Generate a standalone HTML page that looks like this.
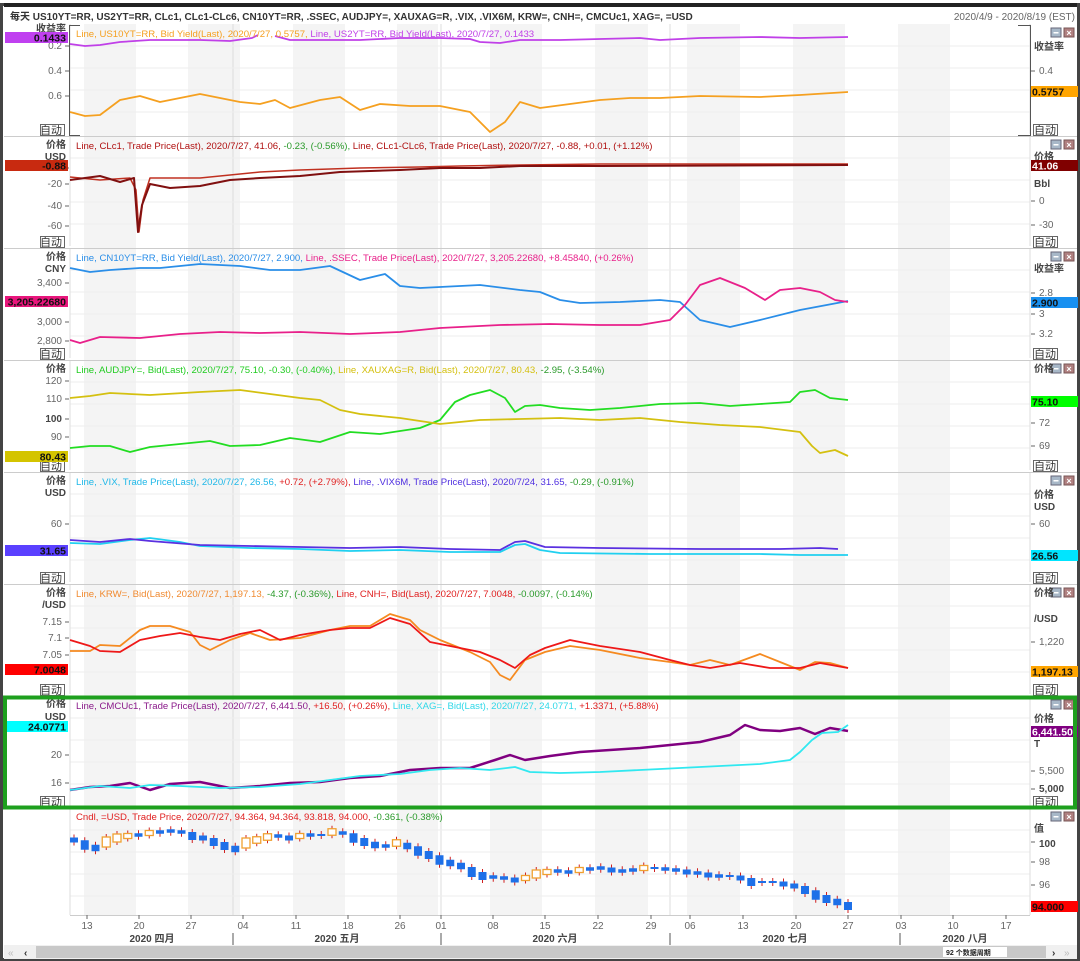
<!DOCTYPE html>
<html><head><meta charset="utf-8"><style>
html,body{margin:0;padding:0;background:#fff;}
body{width:1080px;height:961px;overflow:hidden;}
svg{display:block;font-family:"Liberation Sans","Noto Sans CJK SC",sans-serif;}
.t{font-size:9.6px;}
.ax{font-size:10px;fill:#666;}
.axb{font-size:10px;fill:#444;font-weight:bold;}
</style></head><body>
<svg id="s" width="1080" height="961" viewBox="0 0 1080 961" xmlns="http://www.w3.org/2000/svg">
<rect x="0" y="0" width="1080" height="961" fill="#fff"/>
<g id="bands"></g>
<g id="grid"></g>
<rect x="1.5" y="4.5" width="1077" height="955" fill="none" stroke="#444" stroke-width="3"/>
<line x1="4" y1="5" x2="1077" y2="5" stroke="#222" stroke-width="4"/>
<text x="10" y="20" style="font-size:10px;font-weight:bold;fill:#333">每天 US10YT=RR, US2YT=RR, CLc1, CLc1-CLc6, CN10YT=RR, .SSEC, AUDJPY=, XAUXAG=R, .VIX, .VIX6M, KRW=, CNH=, CMCUc1, XAG=, =USD</text>
<text x="1075" y="20" text-anchor="end" class="ax">2020/4/9 - 2020/8/19 (EST)</text>
<g id="seps"></g>
<g id="lines"></g>
<g id="candles"></g>
<path d="M80,25.5 H69.5 V135.5 H80 M1018,25.5 H1030.5 V135.5 H1018" fill="none" stroke="#555" stroke-width="1"/>
<text x="76" y="37" class="t"><tspan fill="#f5a020">Line, US10YT=RR, Bid Yield(Last), 2020/7/27, 0.5757, </tspan><tspan fill="#c040e8">Line, US2YT=RR, Bid Yield(Last), 2020/7/27, 0.1433</tspan></text>
<text x="76" y="149" class="t" fill="#b01010">Line, CLc1, Trade Price(Last), 2020/7/27, 41.06, <tspan fill="#2a9a2a">-0.23, (-0.56%),</tspan> Line, CLc1-CLc6, Trade Price(Last), 2020/7/27, -0.88, +0.01, (+1.12%)</text>
<text x="76" y="261" class="t"><tspan fill="#2a8ee8">Line, CN10YT=RR, Bid Yield(Last), 2020/7/27, 2.900, </tspan><tspan fill="#e8208a">Line, .SSEC, Trade Price(Last), 2020/7/27, 3,205.22680, +8.45840, (+0.26%)</tspan></text>
<text x="76" y="373" class="t"><tspan fill="#22cc22">Line, AUDJPY=, Bid(Last), 2020/7/27, 75.10, -0.30, (-0.40%), </tspan><tspan fill="#d4c010">Line, XAUXAG=R, Bid(Last), 2020/7/27, 80.43, </tspan><tspan fill="#2a9a2a">-2.95, (-3.54%)</tspan></text>
<text x="76" y="485" class="t"><tspan fill="#20b8e8">Line, .VIX, Trade Price(Last), 2020/7/27, 26.56, </tspan><tspan fill="#e02020">+0.72, (+2.79%), </tspan><tspan fill="#5030e0">Line, .VIX6M, Trade Price(Last), 2020/7/24, 31.65, </tspan><tspan fill="#2a9a2a">-0.29, (-0.91%)</tspan></text>
<text x="76" y="597" class="t"><tspan fill="#f08a30">Line, KRW=, Bid(Last), 2020/7/27, 1,197.13, </tspan><tspan fill="#2a9a2a">-4.37, (-0.36%), </tspan><tspan fill="#e02020">Line, CNH=, Bid(Last), 2020/7/27, 7.0048, </tspan><tspan fill="#2a9a2a">-0.0097, (-0.14%)</tspan></text>
<text x="76" y="709" class="t"><tspan fill="#8a1a8a">Line, CMCUc1, Trade Price(Last), 2020/7/27, 6,441.50, </tspan><tspan fill="#e02020">+16.50, (+0.26%), </tspan><tspan fill="#30d8e8">Line, XAG=, Bid(Last), 2020/7/27, 24.0771, </tspan><tspan fill="#e02020">+1.3371, (+5.88%)</tspan></text>
<text x="76" y="820" class="t"><tspan fill="#e02020">Cndl, =USD, Trade Price, 2020/7/27, 94.364, 94.364, 93.818, 94.000, </tspan><tspan fill="#2a9a2a">-0.361, (-0.38%)</tspan></text>
<g id="axes"></g>
<rect x="5" y="697.5" width="1070" height="110" fill="none" stroke="#1ea01e" stroke-width="4"/>
<rect x="4" y="915" width="1073" height="30" fill="#fff"/>
<line x1="70" y1="915.5" x2="1030" y2="915.5" stroke="#ccc"/>
<g id="dates"></g>
<text x="152" y="942" text-anchor="middle" class="axb">2020 四月</text>
<text x="337" y="942" text-anchor="middle" class="axb">2020 五月</text>
<text x="555" y="942" text-anchor="middle" class="axb">2020 六月</text>
<text x="785" y="942" text-anchor="middle" class="axb">2020 七月</text>
<text x="965" y="942" text-anchor="middle" class="axb">2020 八月</text>
<line x1="233" y1="933" x2="233" y2="945" stroke="#555"/>
<line x1="441" y1="933" x2="441" y2="945" stroke="#555"/>
<line x1="670" y1="933" x2="670" y2="945" stroke="#555"/>
<line x1="900" y1="933" x2="900" y2="945" stroke="#555"/>
<rect x="4" y="945" width="1073" height="14" fill="#f0f0f0"/>
<rect x="36" y="946" width="1010" height="12" fill="#c8c8c8"/>
<text x="8" y="956" style="font-size:10px;fill:#bbb">«</text>
<text x="24" y="956" style="font-size:10px;fill:#333;font-weight:bold">‹</text>
<text x="1052" y="956" style="font-size:10px;fill:#333;font-weight:bold">›</text>
<text x="1064" y="956" style="font-size:10px;fill:#bbb">»</text>
<rect x="943" y="947" width="64" height="10" fill="#fff"/>
<text x="946" y="955" style="font-size:7px;fill:#222;font-weight:bold">92 个数据周期</text>
</svg>
<script>
var NS="http://www.w3.org/2000/svg";
function el(g,t,a,txt){var e=document.createElementNS(NS,t);for(var k in a)e.setAttribute(k,a[k]);if(txt!=null)e.textContent=txt;document.getElementById(g).appendChild(e);return e;}
[[84,136],[188,240],[293,345],[397,438],[490,542],[595,648],[687,740],[793,845],[898,950]].forEach(function(b){el('bands','rect',{x:b[0],y:24,width:b[1]-b[0],height:891,fill:'#f4f4f4'});});
[233,441,670].forEach(function(x){el('grid','line',{x1:x,y1:24,x2:x,y2:915,stroke:'#ddd'});});
var tops=[24,136,248,360,472,584,696,808];
tops.forEach(function(t,i){
 for(var k=1;k<5;k++)el('grid','line',{x1:70,y1:t+k*22,x2:1030,y2:t+k*22,stroke:'#eee'});
 el('grid','line',{x1:70,y1:t+110,x2:70,y2:t,stroke:'#ddd'});
 el('grid','line',{x1:1030,y1:t+110,x2:1030,y2:t,stroke:'#ddd'});
 if(i>0)el('seps','line',{x1:4,y1:t+0.5,x2:1077,y2:t+0.5,stroke:'#ccc'});
 el('seps','rect',{x:1051,y:t+4,width:10,height:9,fill:'#a8b8c8',stroke:'#667'});
 el('seps','rect',{x:1053.5,y:t+8,width:5,height:1.5,fill:'#fff'});
 el('seps','rect',{x:1064,y:t+4,width:10,height:9,fill:'#b08080',stroke:'#755'});
 el('seps','text',{x:1069,y:t+12,'text-anchor':'middle',style:'font-size:9px;fill:#fff;font-weight:bold'},'×');
 if(i<7){el('seps','text',{x:40,y:t+110,style:'font-size:11px;fill:#333'},'自动');
  el('seps','rect',{x:40.5,y:t+100.5,width:24,height:11,fill:'none',stroke:'#666'});
  el('seps','text',{x:1034,y:t+110,style:'font-size:11px;fill:#333'},'自动');
  el('seps','rect',{x:1033.5,y:t+100.5,width:24,height:11,fill:'none',stroke:'#666'});}
});
function L(pts,c,w){el('lines','polyline',{points:pts,fill:'none',stroke:c,'stroke-width':w||1.8,'stroke-linejoin':'round'});}
L("70,44 85,46 100,45 120,42 150,40 200,40 230,41 252,38 258,35",'#c040e8');
L("275,36 290,40 320,40 360,40 400,38 440,38 470,39 480,42 500,43 520,40 560,40 600,39 640,38 660,40 700,38 760,37 800,38 848,37",'#c040e8');
L("70,112 85,116 100,115 120,100 140,96 160,102 180,98 200,94 220,98 240,102 260,104 275,100 290,108 320,100 340,97 360,110 380,104 410,106 440,106 470,112 490,132 505,122 520,102 540,108 570,104 600,100 630,98 660,98 700,96 760,97 800,95 848,92",'#f5a020');
L("70,177 100,180 130,178 136,190 139,232 143,200 150,178 200,178 260,172 300,170 360,168 420,167 460,166 520,165 600,164 848,164",'#c03020',1.5);
L("70,180 100,176 120,182 134,178 138,232 142,205 150,184 170,188 200,186 230,180 260,178 300,176 340,172 400,170 440,168 480,168 520,166 600,166 848,165",'#801010',2);
L("70,268 90,272 110,270 140,268 160,268 200,264 240,266 270,270 300,270 330,266 360,280 385,274 400,286 420,288 480,285 520,290 540,292 560,300 580,303 620,302 660,300 680,302 700,320 730,327 760,320 800,310 848,301",'#2a8ee8');
L("70,340 80,343 100,337 140,338 180,334 220,332 260,333 300,332 350,334 400,332 440,328 500,325 550,324 600,325 640,325 670,320 685,305 700,285 720,278 745,288 765,300 780,290 800,288 820,292 835,300 848,302",'#e8208a');
L("70,448 90,446 110,446 130,452 150,447 180,444 210,441 230,446 260,445 290,438 320,442 350,432 380,434 420,428 440,420 455,402 470,395 490,390 505,398 515,412 525,406 540,405 560,408 590,410 620,408 660,404 700,403 730,406 760,404 790,402 800,392 815,390 830,398 848,400",'#22dd22');
L("70,398 90,396 110,393 150,395 200,392 240,390 270,394 300,398 320,400 340,410 360,414 400,418 440,424 480,420 520,419 560,418 600,420 640,418 680,422 720,425 760,427 800,432 812,446 820,453 835,450 848,456",'#d4c010');
L("70,543 100,544 130,540 150,538 180,542 200,546 250,548 300,549 350,551 400,550 450,552 500,552 515,545 525,544 540,550 560,553 650,554 700,554 760,554 800,555 848,555",'#20d0f0');
L("70,540 100,542 130,539 150,541 200,545 250,546 300,547 350,548 400,547 450,549 500,550 515,542 525,541 545,547 600,548 700,549 780,549 820,548 838,549",'#5a30e0');
L("70,651 90,651 100,645 120,646 140,630 150,626 170,626 190,632 200,645 210,650 230,640 250,633 270,640 300,638 330,630 350,626 370,626 390,614 410,620 420,630 440,640 470,652 490,662 500,675 510,680 525,660 545,652 570,646 600,650 640,658 670,662 690,665 710,660 730,665 760,654 780,662 800,670 815,662 830,663 848,668",'#f58a20');
L("70,640 90,646 100,651 120,652 140,640 160,636 180,633 200,637 220,640 240,634 260,630 280,640 300,635 330,630 350,628 370,628 390,618 410,624 430,642 460,648 480,652 500,660 515,668 530,655 545,648 570,640 600,646 640,652 670,660 690,665 710,668 740,663 770,668 800,668 820,663 848,668",'#ee1818');
L("70,790 90,787 110,786 130,783 150,790 170,784 200,782 230,788 260,786 290,783 320,782 350,778 380,776 410,770 440,768 470,768 495,760 510,755 525,760 550,756 580,752 610,750 640,748 670,745 700,742 730,735 745,725 760,730 780,731 800,728 815,734 830,728 848,731",'#800080',2.5);
L("70,790 100,786 130,788 150,785 180,786 220,788 260,787 300,784 330,780 360,776 400,774 430,770 460,768 490,770 515,767 530,772 560,773 600,772 640,770 680,768 720,766 760,764 790,760 800,752 812,740 822,733 838,732 848,725",'#30e8f0');
var cy=[840,845,848,842,838,836,835,833,832,831,832,836,838,842,846,849,843,840,837,836,838,836,835,835,832,833,838,842,845,846,843,846,851,855,860,863,866,872,876,877,878,880,878,874,872,871,872,870,869,868,870,871,870,868,868,869,870,872,873,875,876,876,878,882,882,882,884,886,890,895,899,902,906];
var n=cy.length;
for(var i=0;i<n;i++){var x=74+i*(848-74)/(n-1);var prev=i?cy[i-1]:cy[0]-2;var y=cy[i];var up=y<prev-1;
 var h=Math.max(2,Math.min(10,Math.abs(y-prev)*1.5+2));
 el('candles','line',{x1:x,y1:y-h/2-3,x2:x,y2:y+h/2+3,stroke:'#d02020','stroke-width':1});
 if(up)el('candles','rect',{x:x-4,y:y-h/2,width:8,height:h,fill:'#fff',stroke:'#f0a030','stroke-width':1.3});
 else el('candles','rect',{x:x-4,y:y-h/2,width:8,height:h,fill:'#1e70e8'});}
function A(x,y,t,anchor,cls){el('axes','text',{x:x,y:y,'text-anchor':anchor||'end',class:cls||'ax'},t);}
function tk(x,y){el('axes','line',{x1:x,y1:y,x2:x+4,y2:y,stroke:'#666'});}
function TL(y,t){A(62,y+3,t);tk(65,y);} function TR(y,t){A(1039,y+3,t,'start');tk(1031,y);}
A(66,32,'收益率','end','axb');TL(46,'0.2');TL(71,'0.4');TL(96,'0.6');
A(1034,50,'收益率','start','axb');TR(71,'0.4');
A(66,148,'价格','end','axb');A(66,160,'USD','end','axb');TL(168,'0');TL(184,'-20');TL(206,'-40');TL(226,'-60');
A(1034,160,'价格','start','axb');A(1034,187,'Bbl','start','axb');TR(201,'0');TR(225,'-30');
A(66,260,'价格','end','axb');A(66,272,'CNY','end','axb');TL(283,'3,400');TL(322,'3,000');TL(341,'2,800');
A(1034,272,'收益率','start','axb');TR(293,'2.8');TR(314,'3');TR(334,'3.2');
A(66,372,'价格','end','axb');TL(381,'120');TL(399,'110');A(62,422,'100','end','axb');tk(65,419);TL(437,'90');
A(1034,372,'价格','start','axb');TR(423,'72');TR(446,'69');
A(66,484,'价格','end','axb');A(66,496,'USD','end','axb');TL(524,'60');
A(1034,498,'价格','start','axb');A(1034,510,'USD','start','axb');TR(524,'60');
A(66,596,'价格','end','axb');A(66,608,'/USD','end','axb');TL(622,'7.15');TL(638,'7.1');TL(655,'7.05');
A(1034,596,'价格','start','axb');A(1034,622,'/USD','start','axb');TR(642,'1,220');
A(66,707,'价格','end','axb');A(66,720,'USD','end','axb');TL(755,'20');TL(783,'16');
A(1034,722,'价格','start','axb');A(1034,747,'T','start','axb');TR(771,'5,500');A(1039,792,'5,000','start','axb');tk(1031,789);
A(1034,832,'值','start','axb');A(1039,847,'100','start','axb');tk(1031,842);TR(862,'98');TR(885,'96');
function B(x,y,w,t,bg,fg){el('axes','rect',{x:x,y:y,width:w,height:11,fill:bg});el('axes','text',{x:x+w-2,y:y+9.5,'text-anchor':'end',style:'font-size:10.5px;font-weight:bold;fill:'+fg},t);}
function BR(y,t,bg,fg){el('axes','rect',{x:1031,y:y,width:47,height:11,fill:bg});el('axes','text',{x:1032,y:y+9.5,style:'font-size:10.5px;font-weight:bold;fill:'+fg},t);}
B(5,32,63,'0.1433','#c040f0','#111');BR(86,'0.5757','#ffa500','#111');
B(5,160,63,'-0.88','#c82a10','#111');BR(160,'41.06','#800000','#fff');
B(5,296,63,'3,205.22680','#e8167c','#111');BR(297,'2.900','#1890f0','#111');
B(5,451,63,'80.43','#d4c400','#111');BR(396,'75.10','#00ff00','#111');
B(5,545,63,'31.65','#5a40ff','#111');BR(550,'26.56','#00e5ff','#111');
B(5,664,63,'7.0048','#ff0000','#111');BR(666,'1,197.13','#ffa500','#111');
B(5,721,63,'24.0771','#00ffff','#111');BR(726,'6,441.50','#800080','#fff');
BR(901,'94.000','#ff0000','#111');
[[87,'13'],[139,'20'],[191,'27'],[243,'04'],[296,'11'],[348,'18'],[400,'26'],[441,'01'],[493,'08'],[545,'15'],[598,'22'],[651,'29'],[690,'06'],[743,'13'],[796,'20'],[848,'27'],[901,'03'],[953,'10'],[1006,'17']].forEach(function(d){
 el('dates','line',{x1:d[0],y1:915,x2:d[0],y2:919,stroke:'#666'});
 el('dates','text',{x:d[0],y:929,'text-anchor':'middle',class:'ax'},d[1]);});
</script>
</body></html>
